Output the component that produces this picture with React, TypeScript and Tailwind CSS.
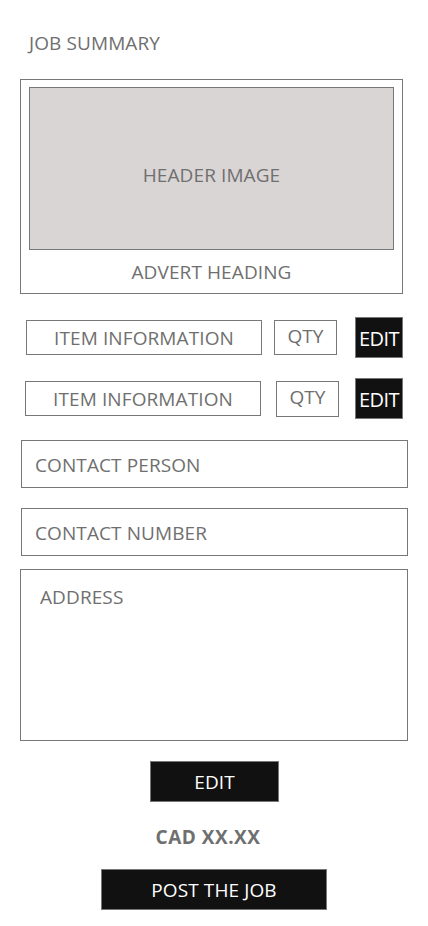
export default function App() {
  return (
    <div
      className="w-[428px] h-[926px] bg-white text-[#6f6f6f] flex flex-col"
      style={{ fontFamily: '"Open Sans", "Noto Sans", sans-serif' }}
    >
      <h1 className="ml-[29px] mt-[30px] text-[19px] leading-[26px] tracking-[0.1px]">JOB SUMMARY</h1>

      {/* advert card */}
      <div className="ml-[20px] mt-[23px] w-[383px] h-[215px] border border-[#777] flex flex-col items-center">
        <div className="mt-[7px] w-[365px] h-[163px] border border-[#777] bg-[#dad5d5] flex items-center justify-center pt-[14px] text-[19px] tracking-[0.1px]">
          HEADER IMAGE
        </div>
        <div className="mt-[9px] text-[19px] leading-[26px] tracking-[0.1px]">ADVERT HEADING</div>
      </div>

      {/* item rows */}
      <div className="mt-[23px] h-[41px] flex items-center">
        <div className="ml-[26px] w-[236px] h-[35px] border border-[#777] flex items-center justify-center pt-[2px] text-[19px] tracking-[0.1px]">
          ITEM INFORMATION
        </div>
        <div className="ml-[12px] w-[63px] h-[35px] border border-[#777] flex items-center justify-center text-[19px] tracking-[0.1px] pb-[2px]">
          QTY
        </div>
        <button className="ml-[18px] w-[48px] h-[41px] bg-[#111] border border-[#777] text-white text-[20px] tracking-[-0.6px] flex items-center justify-center pt-[2px]">
          EDIT
        </button>
      </div>
      <div className="mt-[20px] h-[41px] flex items-center">
        <div className="ml-[25px] w-[236px] h-[35px] border border-[#777] flex items-center justify-center pt-[2px] text-[19px] tracking-[0.1px]">
          ITEM INFORMATION
        </div>
        <div className="ml-[15px] w-[63px] h-[36px] border border-[#777] flex items-center justify-center text-[19px] tracking-[0.1px] pb-[2px]">
          QTY
        </div>
        <button className="ml-[16px] w-[48px] h-[41px] bg-[#111] border border-[#777] text-white text-[20px] tracking-[-0.6px] flex items-center justify-center pt-[2px]">
          EDIT
        </button>
      </div>

      {/* contact fields */}
      <div className="ml-[21px] mt-[21px] w-[387px] h-[48px] border border-[#777] flex items-center pl-[13px] pt-[3px] text-[19px] tracking-[0.1px]">
        CONTACT PERSON
      </div>
      <div className="ml-[21px] mt-[20px] w-[387px] h-[48px] border border-[#777] flex items-center pl-[13px] pt-[3px] text-[19px] tracking-[0.1px]">
        CONTACT NUMBER
      </div>
      <div className="ml-[20px] mt-[13px] w-[388px] h-[172px] border border-[#777] pl-[19px] pt-[14px] text-[19px] leading-[26px] tracking-[0.1px]">
        ADDRESS
      </div>

      {/* actions */}
      <button className="self-start ml-[150px] mt-[20px] w-[129px] h-[41px] bg-[#111] border border-[#777] text-white text-[19px] tracking-[0.1px] flex items-center justify-center pt-[2px]">
        EDIT
      </button>
      <div className="mt-[22px] text-center text-[19px] leading-[26px] font-bold tracking-[0.5px] pr-[12px]">CAD XX.XX</div>
      <button className="self-start ml-[101px] mt-[19px] w-[226px] h-[41px] bg-[#111] border border-[#777] text-white text-[19px] tracking-[0.1px] flex items-center justify-center pt-[2px]">
        POST THE JOB
      </button>
    </div>
  );
}
